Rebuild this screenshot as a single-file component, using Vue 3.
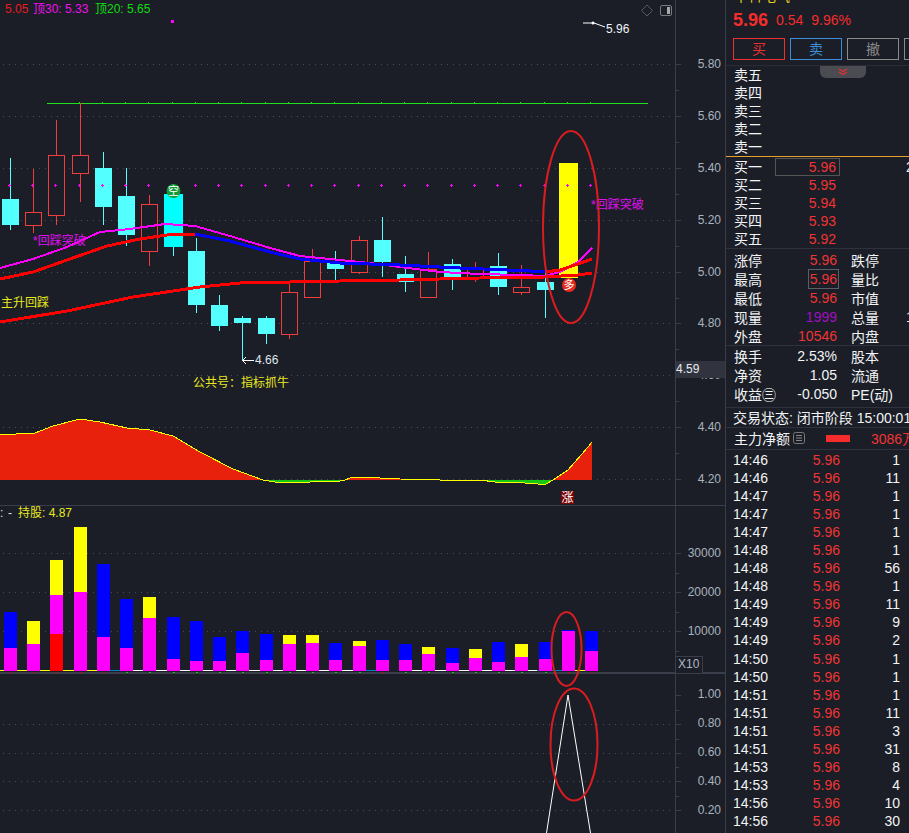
<script setup>
// [left, width, bodyTop, bodyBottom, wickTop, wickBottom, kind]
const candles = [
  [2,17,199,225,158,230,'c'],[25,17,212,226,169,233,'r'],[48,17,155,216,120,225,'r'],[72,17,155,174,103,202,'r'],
  [95,17,168,207,152,225,'c'],[118,17,196,235,168,246,'c'],[141,17,204,252,195,266,'r'],[164,19,194,247,194,256,'b'],
  [188,17,251,305,238,313,'c'],[211,17,305,326,295,331,'c'],[234,17,318,323,316,360,'c'],[258,17,318,334,316,344,'c'],
  [281,17,292,335,283,339,'r'],[304,17,261,298,249,298,'r'],[327,17,263,269,251,280,'c'],[351,17,240,273,236,274,'r'],
  [374,17,240,262,217,277,'c'],[397,17,274,282,256,292,'c'],[420,17,269,298,252,298,'r'],[444,17,264,277,259,290,'c'],
  [467,17,269,278,262,282,'r'],[490,17,266,287,253,295,'c'],[513,17,287,293,265,295,'r'],[537,17,282,290,270,318,'c'],
  [559,19,163,278,163,278,'y']
]
// [left, top, splitTop, kind, redTop]
const bars = [
  [4,612,648,'b'],[27,621,644,'y'],[50,560,595,'y',634],[74,527,592,'y'],[97,564,637,'b'],[120,599,648,'b'],
  [143,597,618,'y'],[167,617,659,'b'],[190,621,661,'b'],[213,637,661,'b'],[236,631,653,'b'],[260,634,660,'b'],
  [283,635,644,'y'],[306,635,643,'y'],[329,643,660,'b'],[353,641,646,'y'],[376,640,660,'b'],[399,644,660,'b'],
  [422,647,654,'y'],[446,648,663,'b'],[469,649,658,'y'],[492,642,662,'b'],[515,644,657,'y'],[539,642,659,'b'],
  [562,630,631,'b'],[585,631,651,'b']
]
const barColor = { b: '#0000ff', y: '#ffff00' }
const plusX = [9,32,55,79,102,125,148,172,195,218,241,265,288,311,334,358,381,404,427,451,474,497,520,544,567,590]
const tickX = [79,102,125,148,172,195,218,241,265,288,311,334,358,381,404,427,451,474,497,520,544,567,590]
const grid = [64,116,168,220,272,323,375,427,479,553,592,631,724,753,781,810]
const labels = [
  ['5.80',64],['5.60',116],['5.40',168],['5.20',220],['5.00',272],['4.80',323],['4.60',375],['4.40',427],['4.20',479]
]
const volLabels = [['30000',553],['20000',592],['10000',631]]
const lowLabels = [['1.00',694],['0.80',723],['0.60',752],['0.40',781],['0.20',810]]
const major = [64,116,168,220,272,323,375,427,479,553,592,631,695,724,753,781,810]
const minor = [90,142,194,246,298,349,401,453,573,612,651,710,739,767,796]
const redUpper = '0,279 33,272 67,260 107,246 140,239 167,235 195,234'
const blueLine = '195,234 230,241 270,252 300,259 340,263 400,265 460,268 530,271 545,272'
const redTail = '545,272 560,270 578,264 592,259'
const magenta = '0,268 33,259 67,247 100,232 130,229 165,224 195,226 230,236 270,248 300,256 340,260 370,263 400,267 440,272 480,274 520,275 545,276 560,272 578,262 592,248'
const redLower = '0,322 67,311 133,297 200,287 240,283 340,281 400,280 480,278 545,277 578,275 592,273'
const areaRed1 = '0,435 16,434 35,433 53,426 80,419 100,422 127,428 150,430 173,436 200,452 233,469 263,480'
const areaGreen1 = '263,480 275,482 285,482.5 297,483 310,482 340,481 345,480'
const areaRed2 = '345,480 350,478 360,477 400,479 440,480'
const areaGreen2 = '440,480 480,480 495,482 510,482 525,483 545,484.5 553,480'
const areaRed3 = '553,480 568,470 588,447 592,442'

const sells = ['卖五','卖四','卖三','卖二','卖一']
const buys = [['买一','5.96'],['买二','5.95'],['买三','5.94'],['买四','5.93'],['买五','5.92']]
const stats = [
  ['涨停','5.96','red','跌停',''],['最高','5.96','red box','量比',''],['最低','5.96','red','市值',''],
  ['现量','1999','purple','总量','1'],['外盘','10546','red','内盘','']
]
const stats2 = [['换手','2.53%','股本'],['净资','1.05','流通'],['收益㊂','-0.050','PE(动)']]
const ticks = [
  ['14:46',1],['14:46',11],['14:47',1],['14:47',1],['14:47',1],['14:48',1],['14:48',56],['14:48',1],['14:49',11],
  ['14:49',9],['14:49',2],['14:50',1],['14:50',1],['14:51',1],['14:51',11],['14:51',3],['14:51',31],['14:53',8],
  ['14:53',4],['14:56',10],['14:56',30]
]
</script>

<template>
  <div class="app">
    <svg class="chart" width="725" height="833" viewBox="0 0 725 833">
      <!-- grid -->
      <line v-for="y in grid" :key="'g' + y" x1="3" x2="675" :y1="y + 0.5" :y2="y + 0.5" class="grid" />
      <line x1="0" x2="725" y1="505.5" y2="505.5" class="axis" />
      <line x1="0" x2="725" y1="673" y2="673" class="axis thick" />
      <line x1="675.5" x2="675.5" y1="0" y2="833" class="axis" />
      <line v-for="y in major" :key="'m' + y" x1="675" x2="681" :y1="y + 0.5" :y2="y + 0.5" class="axis" />
      <line v-for="y in minor" :key="'n' + y" x1="675" x2="679" :y1="y + 0.5" :y2="y + 0.5" class="axis" />

      <!-- high line -->
      <line x1="47" x2="648" y1="103.5" y2="103.5" class="green" />
      <rect v-for="x in tickX" :key="'t' + x" :x="x" y="102" width="1" height="1" fill="#20e020" />

      <!-- candles -->
      <g v-for="c in candles" :key="c[0]">
        <line :x1="c[0] + Math.floor(c[1] / 2) + 0.5" :x2="c[0] + Math.floor(c[1] / 2) + 0.5" :y1="c[4]" :y2="c[5]" :class="c[6] === 'r' ? 'wick-red' : 'wick-cyan'" />
        <rect v-if="c[6] === 'r'" :x="c[0] + 0.5" :y="c[2] + 0.5" :width="c[1] - 1" :height="c[3] - c[2] - 1" class="body-red" />
        <rect v-else :x="c[0]" :y="c[2]" :width="c[1]" :height="c[3] - c[2]" :class="'body-' + c[6]" />
      </g>

      <!-- moving averages -->
      <polyline :points="magenta" class="ma ma-magenta" />
      <polyline :points="redUpper" class="ma ma-red" />
      <polyline :points="blueLine" class="ma ma-blue" />
      <polyline :points="redTail" class="ma ma-red" />
      <polyline :points="redLower" class="ma ma-red" />

      <!-- plus marks -->
      <g v-for="x in plusX" :key="'p' + x">
        <rect :x="x - 1" y="185" width="3" height="1" fill="#ff00ff" />
        <rect :x="x" y="184" width="1" height="3" fill="#ff00ff" />
      </g>
      <rect x="171" y="20" width="3" height="3" fill="#ff00ff" />

      <!-- legend -->
      <text y="9" class="t sm"><tspan x="5" fill="#e81c1c">5.05</tspan><tspan x="33" fill="#ee10ee">顶30: 5.33</tspan><tspan x="95" fill="#10dd10">顶20: 5.65</tspan></text>

      <!-- top right icons -->
      <path d="M647 5 L652.500 10.500 L647 16 L641.500 10.500 Z" fill="none" stroke="#555a64" />
      <rect x="660.500" y="5.500" width="11" height="10" rx="1.500" fill="none" stroke="#777b84" />
      <rect x="667" y="7" width="3" height="7" fill="#a8a8a8" />

      <!-- annotations -->
      <polyline points="583,23 594,23 605,27" fill="none" stroke="#fff" />
      <circle cx="593" cy="23" r="1.500" fill="#fff" />
      <text x="606" y="29" class="t sm" fill="#f0f4f8">5.96</text>
      <path d="M246 357 L242.500 360.500 L246 364 M242.500 360.500 H254" fill="none" stroke="#fff" />
      <text x="255" y="360" class="t sm" fill="#dfe6ee">4.66</text>
      <text x="33" y="241" class="t sm" fill="#e010f0">*回踩突破</text>
      <text x="591" y="205" class="t sm" fill="#e010f0">*回踩突破</text>
      <text x="1" y="303" class="t sm" fill="#e8e820">主升回踩</text>
      <text x="193" y="383" class="t sm" fill="#e8e820">公共号：指标抓牛</text>

      <circle cx="173.500" cy="191" r="7" fill="#159a3a" />
      <text x="173.500" y="191" class="t xs mid" fill="#fff">空</text>
      <circle cx="569" cy="285" r="7" fill="#e82a1c" />
      <text x="569" y="285" class="t xs mid" fill="#fff">多</text>
      <rect x="561" y="491" width="13" height="13" fill="#7a0505" />
      <text x="567.500" y="497.500" class="t sm mid" fill="#fff">涨</text>

      <!-- area oscillator -->
      <polygon :points="areaRed1 + ' 0,480'" fill="#e8210c" />
      <polygon :points="areaGreen1" fill="#14c814" />
      <polygon :points="areaRed2" fill="#e8210c" />
      <polygon :points="areaGreen2" fill="#14c814" />
      <polygon :points="areaRed3 + ' 592,480'" fill="#e8210c" />
      <polyline :points="areaRed1 + ' ' + areaGreen1 + ' ' + areaRed2 + ' ' + areaGreen2 + ' ' + areaRed3" class="osc" />

      <!-- volume -->
      <text y="513" class="t sm"><tspan x="0" fill="#e0e0e0">:</tspan><tspan x="8" fill="#e0e0e0">-</tspan><tspan x="18" fill="#e8e820">持股: 4.87</tspan></text>
      <line x1="0" x2="110" y1="670.500" y2="670.500" stroke="#ffff00" />
      <line x1="110" x2="120" y1="670.500" y2="670.500" stroke="#0080c0" />
      <line x1="133" x2="366" y1="670.500" y2="670.500" stroke="#fff" />
      <line x1="366" x2="376" y1="670.500" y2="670.500" stroke="#0080c0" />
      <line x1="399" x2="537" y1="670.500" y2="670.500" stroke="#fff" />
      <line x1="537" x2="562" y1="670.500" y2="670.500" stroke="#0080c0" />
      <line x1="575" x2="585" y1="670.500" y2="670.500" stroke="#ffff00" />
      <g v-for="(b, i) in bars" :key="'b' + b[0]">
        <rect :x="b[0]" :y="b[1]" width="13" :height="b[2] - b[1]" :fill="barColor[b[3]]" />
        <rect :x="b[0]" :y="b[2]" width="13" :height="671 - b[2]" fill="#ff00ff" />
        <rect v-if="b[4]" :x="b[0]" :y="b[4]" width="13" :height="671 - b[4]" fill="#ff0000" />
        <rect :x="b[0] + 6" y="672" width="2" height="1" :fill="[0,1,2,3,4,16,24,25].includes(i) ? '#c01010' : '#14c814'" />
      </g>

      <!-- signal pane -->
      <polyline points="546.500,833 568,695 590.500,833" class="signal" />

      <!-- axis labels -->
      <text v-for="l in labels" :key="l[0]" x="721" :y="l[1]" class="t sm end axis-text">{{ l[0] }}</text>
      <text v-for="l in volLabels" :key="l[0]" x="721" :y="l[1]" class="t sm end axis-text">{{ l[0] }}</text>
      <text v-for="l in lowLabels" :key="l[0]" x="721" :y="l[1]" class="t sm end axis-text">{{ l[0] }}</text>
      <rect x="676" y="361" width="49" height="17" fill="#31343e" />
      <text x="676" y="369" class="t sm" fill="#e6eaf0">4.59</text>
      <rect x="675.500" y="656.500" width="27" height="17" fill="#1b1e27" class="axis" />
      <text x="678" y="664" class="t sm" fill="#b0b8c4">X10</text>

      <!-- hand drawn ellipses -->
      <ellipse cx="571" cy="227" rx="28" ry="96" class="ring" />
      <ellipse cx="566.500" cy="649" rx="15" ry="37" class="ring" />
      <ellipse cx="574" cy="744.500" rx="23.500" ry="56" class="ring" />
    </svg>

    <aside class="side">
      <div class="title"><span>中科电气</span></div>
      <div class="price">
        <b>5.96</b><span>0.54</span><span>9.96%</span>
      </div>
      <div class="btns">
        <div class="btn buy">买</div>
        <div class="btn sell">卖</div>
        <div class="btn undo">撤</div>
        <div class="btn undo"></div>
      </div>
      <div class="book">
        <div class="tab">
          <svg width="12" height="8" viewBox="0 0 12 8"><path d="M2 1 L6 3.500 L10 1 M2 4 L6 6.500 L10 4" fill="none" stroke="#e83030" stroke-width="1.300" /></svg>
        </div>
        <div v-for="s in sells" :key="s" class="orow"><span class="lbl">{{ s }}</span></div>
      </div>
      <div class="book buys">
        <div v-for="(b, i) in buys" :key="b[0]" class="orow">
          <span class="lbl">{{ b[0] }}</span>
          <span class="oval" :class="{ framed: i === 0 }">{{ b[1] }}</span>
          <span v-if="i === 0" class="clip">2</span>
        </div>
      </div>
      <div class="stats">
        <div v-for="s in stats" :key="s[0]" class="srow">
          <span class="lbl">{{ s[0] }}</span>
          <span class="val"><span :class="s[2]">{{ s[1] }}</span></span>
          <span class="lbl2">{{ s[3] }}</span>
          <span v-if="s[4]" class="clip">{{ s[4] }}</span>
        </div>
      </div>
      <div class="stats second">
        <div v-for="s in stats2" :key="s[0]" class="srow">
          <span class="lbl">{{ s[0] }}</span>
          <span class="val">{{ s[1] }}</span>
          <span class="lbl2">{{ s[2] }}</span>
        </div>
      </div>
      <div class="state">交易状态: 闭市阶段 15:00:01</div>
      <div class="flow">
        <span>主力净额</span>
        <svg class="fi" width="12" height="12" viewBox="0 0 12 12"><rect x="0.500" y="0.500" width="11" height="11" rx="2" fill="none" stroke="#777" /><path d="M3 3.500 H9 M3 6 H9 M3 8.500 H9" stroke="#888" /></svg>
        <i class="flowbar"></i>
        <span class="flowval">3086万</span>
      </div>
      <div class="ticks">
        <div v-for="(t, i) in ticks" :key="i" class="trow">
          <span class="time">{{ t[0] }}</span>
          <span class="tp">5.96</span>
          <span class="tq">{{ t[1] }}</span>
        </div>
      </div>
    </aside>
  </div>
</template>

<style scoped>
.app {
  width: 909px;
  height: 833px;
  display: flex;
  overflow: hidden;
  background: #1b1e27;
  font-family: "Liberation Sans", "Noto Sans CJK SC", sans-serif;
}
.chart { display: block; flex: none; }
.grid { stroke: #4a4e58; stroke-dasharray: 1 5; }
.axis { stroke: #3a3e4a; }
.thick { stroke-width: 2; }
.green { stroke: #20e020; }
.wick-red { stroke: #f03c3c; }
.wick-cyan { stroke: #54ffff; }
.body-red { fill: #1b1e27; stroke: #f03c3c; }
.body-c { fill: #54ffff; }
.body-b { fill: #00ffff; }
.body-y { fill: #ffff00; }
.ma { fill: none; shape-rendering: crispEdges; }
.ma-red { stroke: #ff0000; stroke-width: 3; }
.ma-blue { stroke: #0000ff; stroke-width: 3; }
.ma-magenta { stroke: #ff00ff; stroke-width: 2; }
.osc { fill: none; stroke: #ffff00; stroke-width: 1; shape-rendering: crispEdges; }
.signal { fill: none; stroke: #fff; stroke-width: 1; }
.ring { fill: none; stroke: #d81c20; stroke-width: 2; }
.t { font-family: "Liberation Sans", "Noto Sans CJK SC", sans-serif; dominant-baseline: central; }
.sm { font-size: 12px; }
.xs { font-size: 11px; }
.mid { text-anchor: middle; }
.end { text-anchor: end; }
.axis-text { fill: #a9b2be; }

.side {
  width: 184px;
  flex: none;
  border-left: 1px solid #3a3e4a;
  color: #f2f4f6;
  font-size: 14px;
  overflow: hidden;
  box-sizing: border-box;
}
.title { height: 3px; overflow: hidden; padding-left: 8px; color: #e8d020; font-size: 14px; line-height: 14px; }
.title span { display: block; margin-top: -11px; }
.price { display: flex; align-items: center; height: 34px; padding-left: 7px; gap: 8px; color: #f62c2c; font-size: 14px; }
.price b { font-size: 18px; }
.btns { display: flex; gap: 5px; height: 22px; padding-left: 7px; margin-top: 1px; }
.btn {
  flex: none;
  width: 52px;
  box-sizing: border-box;
  border: 1px solid #8a8a8a;
  color: #8a8a8a;
  text-align: center;
  line-height: 20px;
}
.btn.buy { border-color: #f03030; color: #e83030; }
.btn.sell { border-color: #3c8cd8; color: #3c8cd8; }
.book { position: relative; margin-top: 5px; border-top: 1px solid #2a2d36; border-bottom: 1px solid #e8a030; height: 90px; }
.tab {
  position: absolute;
  left: 94px;
  top: 0;
  width: 46px;
  height: 12px;
  background: #4a4c52;
  border-radius: 0 0 6px 6px;
  text-align: center;
  line-height: 0;
  padding-top: 2px;
  box-sizing: border-box;
}
.book.buys { margin-top: 0; border-top: 0; border-bottom: 1px solid #2f323c; height: 92px; padding-top: 1px; box-sizing: border-box; }
.orow { height: 18px; display: flex; align-items: center; padding-left: 8px; position: relative; white-space: nowrap; }
.lbl { width: 41px; flex: none; }
.orow .lbl { margin-bottom: 2px; }
.oval { width: 65px; box-sizing: border-box; text-align: right; padding-right: 4px; color: #f03434; line-height: 18px; height: 18px; }
.framed { outline: 1px solid #555; outline-offset: -1px; }
.clip { position: absolute; left: 180px; }
.stats { padding-top: 1px; border-bottom: 1px solid #2f323c; }
.stats.second { height: 62px; box-sizing: border-box; padding-top: 0; }
.srow { height: 19px; display: flex; align-items: center; padding-left: 8px; position: relative; white-space: nowrap; }
.val { width: 62px; flex: none; text-align: right; }
.lbl2 { margin-left: 14px; }
.red { color: #f03434; }
.purple { color: #a010c0; }
.box { outline: 1px solid #5a5e68; outline-offset: 1px; }
.state { height: 19px; line-height: 21px; padding-left: 7px; white-space: nowrap; font-size: 14px; border-bottom: 1px solid #2f323c; }
.flow { height: 22px; box-sizing: border-box; display: flex; align-items: center; padding: 0 0 1px 8px; border-bottom: 1px solid #2f323c; white-space: nowrap; }
.fi { margin-left: 3px; flex: none; }
.flowbar { display: block; width: 24px; height: 7px; background: #f62c2c; margin-left: 21px; flex: none; }
.flowval { margin-left: 21px; color: #f03434; }
.ticks { padding-top: 1px; }
.trow { height: 18.050px; display: flex; align-items: center; padding-left: 7px; }
.time { width: 51px; flex: none; }
.tp { width: 56px; flex: none; text-align: right; color: #f03434; }
.tq { width: 60px; flex: none; text-align: right; }
</style>

<style>
html, body { background: #1b1e27; overflow: hidden; }
</style>
